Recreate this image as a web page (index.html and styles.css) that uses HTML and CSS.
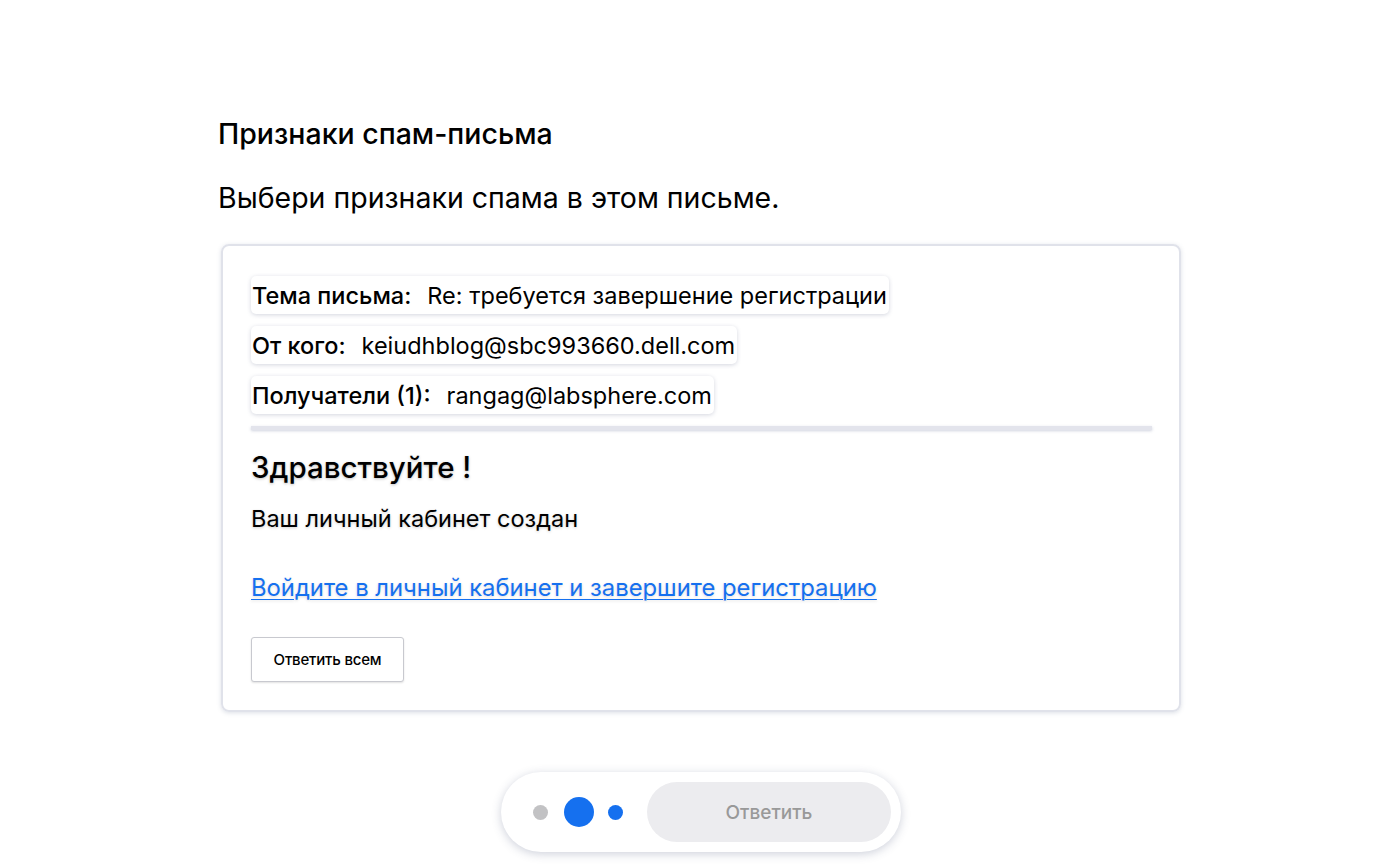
FILE: index.html
```html
<!DOCTYPE html>
<html lang="ru">
<head>
<meta charset="utf-8">
<link rel="stylesheet" href="styles.css">
</head>
<body>
<main class="page">
  <h1 class="title">Признаки спам-письма</h1>
  <p class="task">Выбери признаки спама в этом письме.</p>
  <section class="mail">
    <div class="meta">
      <div class="pill"><b>Тема письма:</b><span>Re: требуется завершение регистрации</span></div>
      <div class="pill"><b>От кого:</b><span>keiudhblog@sbc993660.dell.com</span></div>
      <div class="pill"><b>Получатели (1):</b><span>rangag@labsphere.com</span></div>
    </div>
    <div class="divider"></div>
    <h2 class="greet">Здравствуйте !</h2>
    <p class="body">Ваш личный кабинет создан</p>
    <a class="link" href="#">Войдите в личный кабинет и завершите регистрацию</a>
    <button class="reply-all">Ответить всем</button>
  </section>
</main>
<div class="footer">
  <div class="bar">
    <div class="dots">
      <span class="dot grey"></span>
      <span class="dot big"></span>
      <span class="dot blue"></span>
    </div>
    <button class="answer">Ответить</button>
  </div>
</div>
</body>
</html>
```
FILE: styles.css
```css
* { box-sizing: border-box; }
html, body { margin: 0; padding: 0; background: #fff; }
body {
  font-family: Inter, "Noto Sans", Arial, sans-serif;
  color: #000;
  width: 1388px;
  height: 865px;
  overflow: hidden;
  position: relative;
}
.page {
  width: 964px;
  margin: 0 0 0 218px;
  padding-top: 114px;
}
.title {
  margin: 0;
  font-size: 28.5px;
  font-weight: 550;
  line-height: 40px;
}
.task {
  margin: 24px 0 0;
  font-size: 28.5px;
  font-weight: 400;
  line-height: 40px;
}
.mail {
  margin: 26px 0 0 3px;
  width: 960px;
  height: 468px;
  border: 2px solid #e0e2ea;
  border-radius: 8px;
  box-shadow: 0 1px 4px rgba(120,130,160,0.25);
  padding: 30px 28px 0 28px;
}
.meta { display: flex; flex-direction: column; align-items: flex-start; gap: 12px; }
.pill {
  display: flex;
  align-items: center;
  height: 38px;
  padding: 0 2px 0 1px;
  border-radius: 5px;
  box-shadow: 0 1px 4px rgba(60,70,110,0.22);
  font-size: 23.5px;
  white-space: nowrap;
}
.pill b { font-weight: 550; margin-right: 16px; }
.divider {
  margin-top: 12px;
  height: 4px;
  width: 901px;
  background: #e3e4ec;
  box-shadow: 0 1px 3px rgba(100,110,150,0.3);
}
.greet {
  margin: 20px 0 0;
  font-size: 29.5px;
  font-weight: 550;
  line-height: 34px;
  text-shadow: 0 1px 3px rgba(0,0,0,0.25);
}
.body {
  margin: 20px 0 0;
  font-size: 23.5px;
  line-height: 30px;
  text-shadow: 0 1px 3px rgba(0,0,0,0.2);
}
.link {
  display: inline-block;
  margin-top: 39px;
  font-size: 23.8px;
  line-height: 30px;
  color: #1570ef;
  text-decoration: underline;
  text-decoration-thickness: 1px;
  text-underline-offset: 3px;
  text-shadow: 0 1px 3px rgba(0,0,0,0.15);
}
.reply-all {
  display: block;
  margin-top: 34px;
  width: 153px;
  height: 45px;
  background: #fff;
  border: 1px solid #c8c9cf;
  border-radius: 3px;
  box-shadow: 0 1px 2px rgba(0,0,0,0.12);
  font-family: inherit;
  font-size: 15px;
  font-weight: 500;
  letter-spacing: -0.2px;
  color: #000;
}
.footer {
  position: absolute;
  left: 14px; right: 0; top: 772px;
  display: flex;
  justify-content: center;
}
.bar {
  width: 400px;
  height: 80px;
  border-radius: 40px;
  background: #fff;
  box-shadow: 0 2px 10px rgba(60,70,110,0.25);
  display: flex;
  align-items: center;
  padding: 0 10px 0 32px;
}
.dots { display: flex; align-items: center; width: 114px; }
.dot { display: block; border-radius: 50%; }
.dot.grey { width: 15px; height: 15px; background: #c2c2c4; }
.dot.big { width: 30px; height: 30px; background: #1570ef; margin-left: 16px; }
.dot.blue { width: 15px; height: 15px; background: #1570ef; margin-left: 14px; }
.answer {
  width: 244px;
  height: 60px;
  border: none;
  border-radius: 30px;
  background: #ececef;
  color: #999;
  font-family: inherit;
  font-size: 19px;
  font-weight: 500;
}
```
